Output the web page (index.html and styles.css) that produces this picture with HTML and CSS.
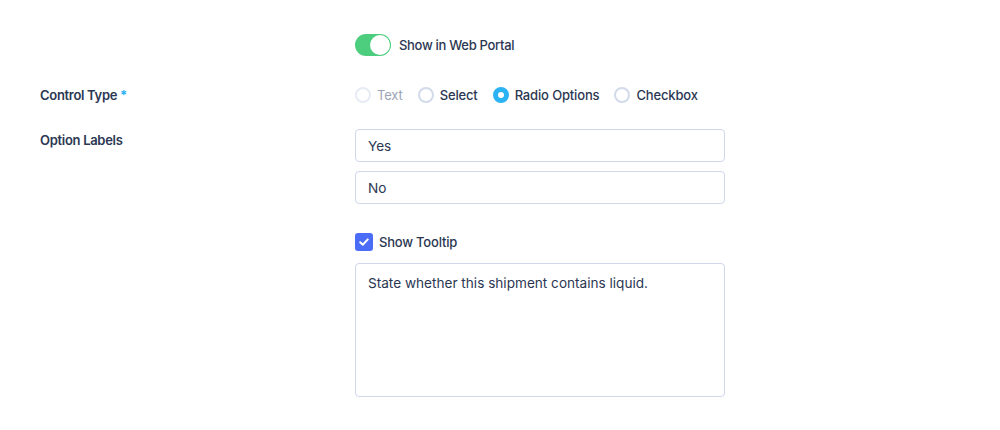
FILE: index.html
```html
<!DOCTYPE html>
<html lang="en">
<head>
<meta charset="utf-8">
<title>Field Settings</title>
<link rel="stylesheet" href="styles.css">
</head>
<body>
<div class="form">
  <div class="row row-toggle">
    <div class="label"></div>
    <div class="field">
      <label class="toggle-line">
        <span class="toggle"><span class="knob"></span></span>
        <span class="toggle-text">Show in Web Portal</span>
      </label>
    </div>
  </div>

  <div class="row row-control">
    <div class="label">Control Type <span class="req">*</span></div>
    <div class="field radios">
      <span class="radio-item disabled"><span class="radio"></span><span class="rtext">Text</span></span>
      <span class="radio-item"><span class="radio"></span><span class="rtext">Select</span></span>
      <span class="radio-item"><span class="radio checked"></span><span class="rtext">Radio Options</span></span>
      <span class="radio-item"><span class="radio"></span><span class="rtext">Checkbox</span></span>
    </div>
  </div>

  <div class="row row-options">
    <div class="label label-options">Option Labels</div>
    <div class="field stack">
      <div class="input">Yes</div>
      <div class="input">No</div>
      <div class="check-line">
        <span class="checkbox">
          <svg viewBox="0 0 18 18" width="18" height="18"><path d="M5.2 9.3 L7.8 11.8 L12.8 6.4" fill="none" stroke="#fff" stroke-width="2" stroke-linecap="round" stroke-linejoin="round"/></svg>
        </span>
        <span class="check-text">Show Tooltip</span>
      </div>
      <div class="textarea">State whether this shipment contains liquid.</div>
    </div>
  </div>
</div>
</body>
</html>
```

FILE: styles.css
```css
html, body {
  margin: 0;
  padding: 0;
  background: #ffffff;
}
body {
  font-family: "Inter", "Lato", "Liberation Sans", sans-serif;
  color: #2b3752;
  font-size: 13px;
}
.form {
  padding: 34px 0 0 40px;
}
.row {
  display: grid;
  grid-template-columns: 315px 370px;
}
.label {
  font-weight: 600;
  font-size: 13px;
  color: #2b3752;
  letter-spacing: -0.3px;
}
.req {
  color: #2bb3f3;
  font-weight: 700;
}
.toggle-line {
  display: flex;
  align-items: center;
  gap: 8px;
  height: 22px;
}
.toggle {
  width: 36px;
  height: 22px;
  border-radius: 11px;
  background: #4cce7e;
  position: relative;
  display: inline-block;
}
.knob {
  position: absolute;
  right: 1px;
  top: 1px;
  width: 20px;
  height: 20px;
  border-radius: 50%;
  background: #fff;
  box-sizing: border-box;
}
.toggle-text {
  font-weight: 500;
  color: #2b3752;
  letter-spacing: -0.3px;
}
.row-control {
  margin-top: 28px;
  align-items: center;
  height: 22px;
}
.radios {
  display: flex;
  align-items: center;
  gap: 15px;
}
.radio-item {
  display: inline-flex;
  align-items: center;
  gap: 6px;
  font-weight: 500;
  letter-spacing: -0.15px;
}
.radio {
  width: 16px;
  height: 16px;
  border-radius: 50%;
  border: 2px solid #d3daea;
  box-sizing: border-box;
  display: inline-block;
  background: #fff;
}
.radio-item.disabled .radio {
  border-color: #e7ebf4;
}
.radio-item.disabled .rtext {
  color: #9ba4b6;
  font-weight: 400;
}
.radio.checked {
  border: 5px solid #2bb3f3;
  background: #fff;
}
.row-options {
  margin-top: 23px;
}
.label-options {
  padding-top: 3px;
}
.stack {
  display: flex;
  flex-direction: column;
}
.input {
  height: 33px;
  box-sizing: border-box;
  border: 1px solid #cfd7e8;
  border-radius: 4px;
  padding: 0 12px;
  display: flex;
  align-items: center;
  font-size: 13.6px;
  color: #2b3752;
}
.input + .input {
  margin-top: 9px;
}
.check-line {
  display: flex;
  align-items: center;
  gap: 6px;
  margin-top: 29px;
  height: 18px;
}
.checkbox {
  width: 18px;
  height: 18px;
  border-radius: 3px;
  background: #4a6cf7;
  display: inline-block;
}
.checkbox svg {
  display: block;
}
.check-text {
  font-weight: 500;
  letter-spacing: -0.2px;
}
.textarea {
  margin-top: 12px;
  height: 134px;
  box-sizing: border-box;
  border: 1px solid #cfd7e8;
  border-radius: 4px;
  padding: 9px 12px;
  font-size: 13.6px;
  line-height: 20px;
  color: #2b3752;
}
```
